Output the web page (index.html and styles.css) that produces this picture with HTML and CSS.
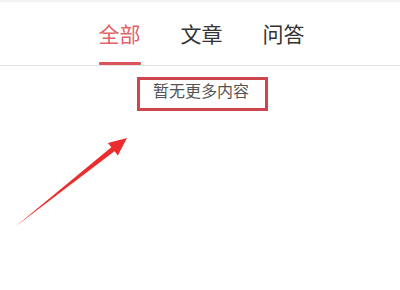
FILE: index.html
```html
<!DOCTYPE html>
<html lang="zh">
<head>
<meta charset="utf-8">
<link rel="stylesheet" href="styles.css">
</head>
<body>
<div class="topband"></div>
<nav class="tabs">
  <div class="tab active"><span class="label">全部</span><span class="bar"></span></div>
  <div class="tab"><span class="label">文章</span><span class="bar"></span></div>
  <div class="tab"><span class="label">问答</span><span class="bar"></span></div>
</nav>
<div class="empty-row">
  <div class="empty">暂无更多内容</div>
</div>
<svg class="arrow" width="140" height="110" viewBox="0 130 140 110" xmlns="http://www.w3.org/2000/svg">
  <polygon points="15.5,226.5 111.3,147.2 107.9,142.9 127,138 117.9,155.5 114.5,151.2" fill="#ec2d2d"/>
</svg>
</body>
</html>
```
FILE: styles.css
```css
html, body {
  margin: 0;
  padding: 0;
  background: #ffffff;
}
body {
  width: 400px;
  height: 290px;
  position: relative;
  overflow: hidden;
  font-family: "Noto Sans CJK SC", "Noto Sans", sans-serif;
}
.topband {
  height: 2px;
  background: #f2f2f2;
}
.tabs {
  display: flex;
  justify-content: center;
  gap: 40px;
  height: 63px;
  border-bottom: 1px solid #e4e4e4;
  padding-left: 3px;
}
.tab {
  display: flex;
  flex-direction: column;
  align-items: center;
  padding-top: 21px;
}
.label {
  font-size: 21px;
  line-height: 21px;
  color: #333333;
}
.bar {
  margin-top: 18px;
  width: 42px;
  height: 3px;
  border-radius: 1px;
}
.tab.active .label {
  color: #e0646a;
}
.tab.active .bar {
  background: #d9555b;
}
.empty-row {
  display: flex;
  justify-content: center;
  padding-top: 11px;
  padding-left: 5px;
}
.empty {
  border: 3px solid #cf454d;
  padding: 2px 16px 10px 13px;
  font-size: 16px;
  line-height: 16px;
  color: #555555;
}
.arrow {
  position: absolute;
  left: 0;
  top: 130px;
}
```
